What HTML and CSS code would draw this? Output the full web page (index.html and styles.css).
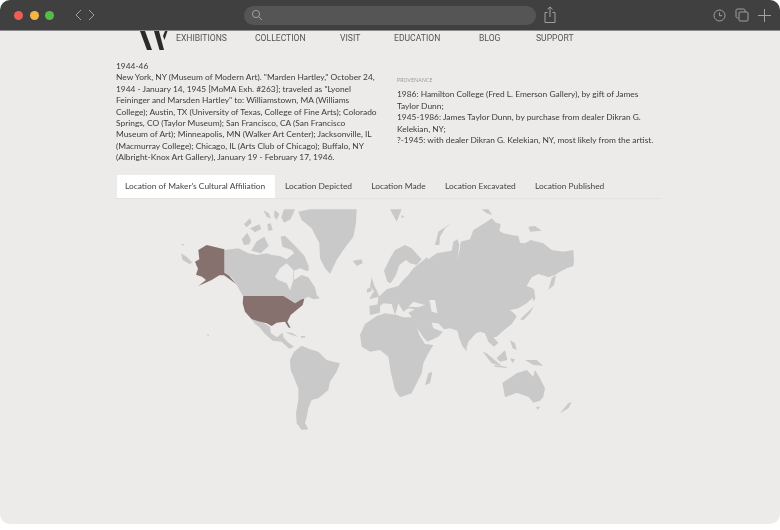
FILE: index.html
```html
<!DOCTYPE html>
<html lang="en">
<head>
  <meta charset="UTF-8" />
  <title>Marsden Hartley - Exhibition history</title>
  <link rel="stylesheet" href="styles.css">
</head>
<body>
  <div class="window">
    <!-- Browser toolbar -->
    <div class="toolbar">
      <span class="dot red"></span>
      <span class="dot yellow"></span>
      <span class="dot green"></span>
      <svg class="chevrons" width="20" height="12" viewBox="0 0 20 12"><path d="M6 1 1 6l5 5M14 1l5 5-5 5"/></svg>
      <div class="address">
        <svg width="12" height="12" viewBox="0 0 12 12"><circle cx="5" cy="5" r="3.6"/><path d="m7.8 7.8 3.2 3.2"/></svg>
      </div>
      <svg class="share" width="12" height="18" viewBox="0 0 12 18"><path d="M3.5 6.5H1v10h10v-10H8.5M6 11V1M3.5 3.2 6 1l2.500 2.200"/></svg>
      <svg class="clock" width="13" height="13" viewBox="0 0 13 13"><circle cx="6.500" cy="6.500" r="5.500"/><path d="M6.500 3.500v3.200h2.500"/></svg>
      <svg class="tabs-icon" width="14" height="14" viewBox="0 0 14 14"><path d="M3 10H2.500A1.500 1.500 0 0 1 1 8.500v-6A1.500 1.500 0 0 1 2.500 1h6A1.500 1.500 0 0 1 10 2.500V4"/><rect x="4" y="4" width="9" height="9" rx="1"/></svg>
      <svg class="plus" width="13" height="13" viewBox="0 0 13 13"><path d="M6.500 0v13M0 6.500h13"/></svg>
    </div>

    <div class="page">
      <!-- Site nav -->
      <div class="site-nav">
        <svg class="logo" width="30" height="20" viewBox="0 0 30 20">
          <path d="M1 0h5l7 19H8z"/>
          <path d="M15 0h5l5 19h-4.500z"/>
          <path d="M26 0h2.500l-3 9-1.500-4z"/>
        </svg>
        <a>EXHIBITIONS</a>
        <a>COLLECTION</a>
        <a>VISIT</a>
        <a>EDUCATION</a>
        <a>BLOG</a>
        <a>SUPPORT</a>
      </div>

      <div class="details">
        <div class="history">
          1944-46<br>
          New York, NY (Museum of Modern Art). "Marden Hartley," October 24,<br>
          1944 - January 14, 1945 [MoMA Exh. #263]; traveled as "Lyonel<br>
          Feininger and Marsden Hartley" to: Williamstown, MA (Williams<br>
          College); Austin, TX (University of Texas, College of Fine Arts); Colorado<br>
          Springs, CO (Taylor Museum); San Francisco, CA (San Francisco<br>
          Museum of Art); Minneapolis, MN (Walker Art Center); Jacksonville, IL<br>
          (Macmurray College); Chicago, IL (Arts Club of Chicago); Buffalo, NY<br>
          (Albright-Knox Art Gallery), January 19 - February 17, 1946.
        </div>
        <div class="provenance">
          <div class="label">PROVENANCE</div>
          1986: Hamilton College (Fred L. Emerson Gallery), by gift of James<br>
          Taylor Dunn;<br>
          1945-1986: James Taylor Dunn, by purchase from dealer Dikran G.<br>
          Kelekian, NY;<br>
          ?-1945: with dealer Dikran G. Kelekian, NY, most likely from the artist.
        </div>
      </div>

      <!-- Location tabs -->
      <div class="tabs">
        <a class="tab active">Location of Maker's Cultural Affiliation</a>
        <a class="tab">Location Depicted</a>
        <a class="tab">Location Made</a>
        <a class="tab">Location Excavated</a>
        <a class="tab">Location Published</a>
      </div>

      <!-- World map, drawn at 3x units -->
      <svg class="map" width="420" height="240" viewBox="0 0 1260 720">
        <g class="land">
          <!-- Greenland, Iceland, arctic islands -->
          <path d="M385 35 420 28H560L558 70 550 110 535 130 520 150 500 180 480 222 465 205 450 175 448 130 425 85 395 60Z"/>
          <path d="M548 182 575 178 578 190 560 198Z"/>
          <path d="M222 72 240 55 245 68 230 82ZM280 30 296 40 303 56 290 50ZM314 30 328 42 320 60 312 48ZM342 28H375L362 58 342 68 334 52ZM240 85 268 73 274 87 255 97ZM292 72 302 70 308 90 295 93ZM215 118 232 98 243 120 238 133 222 135ZM260 124 283 110 296 138 272 160 244 152ZM332 110 345 107 375 137 403 167 418 203 395 190 365 150 337 140Z"/>
          <!-- Canada -->
          <path fill-rule="evenodd" d="M163 150 205 145 235 160 262 165 290 160 305 165 330 168 350 178 372 160 395 175 418 208 412 214 390 205 372 212 372 240 395 225 415 232 435 262 440 285 450 295 430 298 415 290 403 296 395 298 375 310 360 300 340 290H220L200 255 185 232 163 218ZM315 230 330 205 350 190 370 210 370 240 360 272 350 250 325 240Z"/>
          <path d="M33 160 50 170 68 188 58 192 38 180ZM35 132H42V136H35Z"/>
          <!-- Mexico and Central America, Caribbean -->
          <path d="M245 358 280 368 300 380 303 400 320 412 338 398 340 412 352 425 372 440 358 446 335 425 308 422 285 402 268 382 255 372Z"/>
          <path d="M345 397 365 398 385 410 365 405ZM392 408 405 408 405 413 393 413ZM108 401 118 405 115 408Z"/>
          <!-- South America -->
          <path d="M360 480 372 455 395 437 420 448 445 455 470 480 510 490 500 515 480 545 475 570 445 595 425 600 415 625 410 650 405 670 415 688 395 690 380 670 378 640 385 600 385 565 362 510Z"/>
          <!-- Africa, Madagascar -->
          <path d="M570 405 585 372 620 348 645 340 680 345 700 352 730 352 735 365 748 405 765 432 790 435 772 465 760 490 755 520 725 580 690 592 675 570 662 515 655 470 630 450 600 455 575 440Z"/>
          <path d="M765 555 775 520 787 515 780 550Z"/>
          <!-- UK, Ireland, Scandinavia, Svalbard -->
          <path d="M605 232 612 255 622 275 628 290 598 298 612 272 600 260Z"/>
          <path d="M590 268 602 262 606 272 592 278ZM598 318 630 312 630 338 600 345Z"/>
          <path d="M642 212 660 175 675 150 705 135 725 145 755 178 740 195 720 190 708 180 688 195 678 225 662 250 652 245Z"/>
          <path d="M660 28H695L680 65ZM695 45 703 50 695 55Z"/>
          <!-- Eurasia -->
          <path fill-rule="evenodd" d="M600 345 602 318 622 315 625 292 650 268 685 258 700 240 715 225 730 205 755 185 770 172 775 178 800 160 845 152 850 125 862 118 868 135 862 178 870 145 872 125 900 118 910 90 930 78 955 62 965 55 978 68 992 72 988 92 1000 100 1025 105 1045 108 1050 128 1065 130 1082 120 1120 130 1145 150 1180 155 1210 150 1212 180 1210 198 1190 205 1165 218 1155 225 1135 232 1125 228 1105 222 1085 232 1070 258 1088 265 1092 290 1070 310 1045 325 1020 330 1032 340 1040 350 1025 372 1000 392 980 410 970 412 985 428 972 440 955 425 945 400 930 395 918 400 895 425 888 450 878 440 868 415 862 392 840 385 822 388 805 370 785 368 790 385 818 395 805 410 772 425 760 412 735 375 725 350 715 338 735 328 715 325 700 335 685 310 680 330 675 345 665 312 640 310 628 320 618 340ZM715 320 730 305 765 315 745 322ZM778 300H795L802 340 785 335Z"/>
          <!-- Russian and Pacific islands -->
          <path d="M795 135 805 95 845 68 825 85 810 110 808 135ZM935 28H955L967 45 950 40ZM1075 80 1095 78 1115 92 1080 95Z"/>
          <path d="M1135 270 1145 235 1158 225 1152 255ZM1050 358 1090 320 1097 310 1080 340 1060 360ZM1085 275 1092 265 1096 295 1090 305ZM885 445 892 450 888 452Z"/>
          <!-- South East Asia -->
          <path d="M938 455 950 460 995 498 965 490ZM980 475 1005 450 1012 480 990 485ZM1020 420 1035 430 1040 450 1028 445ZM1020 475 1035 478 1028 490ZM1065 480 1100 480 1120 497 1090 495ZM972 495 1010 500 1010 504 975 500Z"/>
          <!-- Australia, Tasmania, New Zealand -->
          <path d="M997 548 1025 530 1040 520 1070 510 1090 530 1095 510 1110 535 1125 565 1120 590 1110 602 1090 608 1075 590 1040 578 1005 592Z"/>
          <path d="M1098 620H1110L1103 630ZM1170 640 1195 610 1205 605 1195 625Z"/>
        </g>
        <g class="selected">
          <path d="M110 135 163 148V218L178 228 198 252 182 240 162 226 148 226 125 240 85 258 108 240 96 230 78 224 84 206 75 185 88 178 85 150Z"/>
          <path d="M220 288H340L360 300 375 310 395 298 403 296 398 315 380 330 362 345 352 365 362 385 355 382 345 365 320 368 305 378 290 370 270 365 245 358 225 335 218 310Z"/>
        </g>
      </svg>
    </div>
  </div>
</body>
</html>
```
FILE: styles.css
```css
body {
  margin: 0;
  background: #fff;
  font-family: "Lato", "Liberation Sans", sans-serif;
  overflow: hidden;
}

.window {
  width: 780px;
  height: 524px;
  background: #ecebea;
  border-radius: 10px;
  overflow: hidden;
}

/* ---------- Browser toolbar ---------- */
.toolbar {
  height: 31px;
  background: #404040;
  border-bottom: 1px solid #8c8c8c;
  box-sizing: border-box;
  display: flex;
  align-items: center;
  padding-left: 14px;
}
.toolbar svg { fill: none; stroke: #a0a0a0; stroke-width: 1; flex: none; }

.dot { width: 9px; height: 9px; border-radius: 50%; margin-right: 6.500px; }
.red { background: #ec5f56; }
.yellow { background: #f4b544; }
.green { background: #54bd4a; }

.toolbar .chevrons { margin-left: 14px; }
.address {
  width: 292px;
  height: 19px;
  margin-left: 149px;
  background: #555;
  border-radius: 10px;
  display: flex;
  align-items: center;
  padding-left: 7px;
  box-sizing: border-box;
}
.toolbar .share { margin-left: 8px; }
.toolbar .clock { margin-left: 157px; }
.toolbar .tabs-icon { margin-left: 9px; }
.toolbar .plus { margin-left: 9px; }

/* ---------- Page ---------- */
.page { padding-left: 116px; color: #3c3c3c; filter: blur(0.35px); }

.site-nav {
  height: 19px;
  display: grid;
  grid-template-columns: 60px 79px 85px 54px 85px 57px auto;
  font-size: 8.600px;
  font-family: "Roboto", sans-serif;
  color: #555;
  line-height: 14px;
}
.logo { fill: #2c2a2b; margin-left: 23px; }

.details {
  display: grid;
  grid-template-columns: 281px 270px;
  margin-top: 11px;
  font-size: 8.400px;
  line-height: 11.400px;
  white-space: nowrap;
}
.provenance .label {
  font-size: 5px;
  color: #999;
  line-height: 8px;
  margin: 15px 0 5.300px;
  letter-spacing: 0.2px;
}

/* ---------- Tabs ---------- */
.tabs {
  display: flex;
  width: 546px;
  height: 23px;
  margin-top: 11.400px;
  border-bottom: 1px solid #e4e3e2;
  font-size: 8.400px;
  line-height: 23px;
  color: #444;
}
.tab { padding: 0 9.600px; }
.tab.active { background: #fff; padding: 0 10px 0 8px; margin-left: 1px; }

.map { display: block; margin-left: 54px; margin-top: 1px; }
.land { fill: #c9c9c9; }
.selected { fill: #86716e; }
```
